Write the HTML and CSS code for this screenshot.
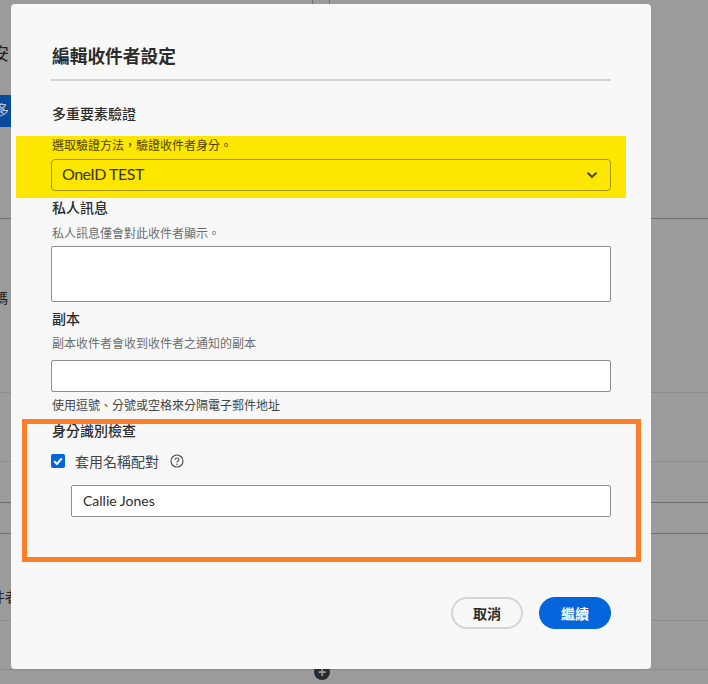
FILE: index.html
```html
<!DOCTYPE html>
<html lang="zh-Hant">
<head>
<meta charset="utf-8">
<title>編輯收件者設定</title>
<link rel="stylesheet" href="styles.css">
</head>
<body>
<div class="backdrop">
  <div class="bg-row bg-top">
    <span class="bg-tick"></span><span class="bg-tick"></span>
    <span class="bg-frag bg-frag-a">安</span>
    <span class="bg-chip">多</span>
  </div>
  <div class="bg-row bg-mid"><span class="bg-frag bg-frag-b">碼</span></div>
  <div class="bg-row bg-r3"></div>
  <div class="bg-row bg-r4"></div>
  <div class="bg-row bg-r5"></div>
  <div class="bg-row bg-r6"><span class="bg-frag bg-frag-c">件者</span></div>
  <div class="bg-row bg-r7"></div>
</div>
<span class="bg-circle">+</span>

<div class="dialog">
  <h1 class="title">編輯收件者設定</h1>
  <div class="rule"></div>

  <h2 class="head head-mfa">多重要素驗證</h2>
  <div class="yellow">
    <p class="hint hint-dark">選取驗證方法&#65292;驗證收件者身分。</p>
    <div class="select">
      <span class="select-value">OneID TEST</span>
      <svg class="chev" width="12" height="8" viewBox="0 0 12 8"><path d="M1.5 1.8 6 6l4.5-4.2" fill="none" stroke="#4a4300" stroke-width="2"/></svg>
    </div>
  </div>

  <h2 class="head head-msg">私人訊息</h2>
  <p class="hint hint-msg">私人訊息僅會對此收件者顯示。</p>
  <div class="field field-area"></div>

  <h2 class="head head-cc">副本</h2>
  <p class="hint hint-cc">副本收件者會收到收件者之通知的副本</p>
  <div class="field field-cc"></div>
  <p class="hint hint-sep">使用逗號、分號或空格來分隔電子郵件地址</p>

  <div class="orange">
    <h2 class="head head-id">身分識別檢查</h2>
    <div class="check-row">
      <span class="checkbox">
        <svg width="14" height="14" viewBox="0 0 14 14"><path d="M3.2 7.2 6 10l4.8-5.6" fill="none" stroke="#fff" stroke-width="2"/></svg>
      </span>
      <span class="check-label">套用名稱配對</span>
      <svg class="help" width="14" height="14" viewBox="0 0 14 14">
        <circle cx="7" cy="7" r="6" fill="none" stroke="#4b4b4b" stroke-width="1.1"/>
        <path d="M5.1 5.6C5.2 4.5 6 4 7 4s1.9.6 1.9 1.6c0 1.4-1.9 1.4-1.9 2.9" fill="none" stroke="#4b4b4b" stroke-width="1.1"/>
        <circle cx="7" cy="10.2" r=".8" fill="#4b4b4b"/>
      </svg>
    </div>
    <div class="field field-name">Callie Jones</div>
  </div>

  <div class="actions">
    <button class="btn btn-cancel">取消</button>
    <button class="btn btn-go">繼續</button>
  </div>
</div>
</body>
</html>
```
FILE: styles.css
```css
html, body {
  margin: 0;
  padding: 0;
  height: 684px;
  overflow: hidden;
}

body {
  position: relative;
  background: #9b9b9b;
  font-family: "Lato", "Noto Sans CJK TC", sans-serif;
  color: #2c2c2c;
}

/* page behind the modal */
.backdrop {
  display: flex;
  flex-direction: column;
}

.bg-row {
  position: relative;
  box-sizing: border-box;
  border-bottom: 1px solid #6f6f6f;
}

.bg-top { height: 219px; }
.bg-mid { height: 174px; border-bottom-color: #8c8c8c; }
.bg-r3 { height: 69px; border-bottom-color: #8c8c8c; }
.bg-r4 { height: 41px; }
.bg-r5 { height: 31px; }
.bg-r6 { height: 87px; border-bottom-color: #8c8c8c; }
.bg-r7 { height: 49px; border-bottom-color: #8c8c8c; }

.bg-tick {
  position: absolute;
  top: 0;
  left: 312px;
  width: 1px;
  height: 5px;
  background: #6f6f6f;
}

.bg-tick + .bg-tick { left: 329px; }

.bg-frag {
  position: absolute;
  font-size: 14px;
  color: #222;
  line-height: 16px;
}

.bg-frag-a { left: -8px; top: 44px; font-size: 17px; line-height: 20px; }
.bg-frag-b { left: -6px; top: 71px; }
.bg-frag-c { left: -9px; top: 55px; }

.bg-chip {
  position: absolute;
  left: 0;
  top: 95px;
  width: 11px;
  height: 32px;
  overflow: hidden;
  background: #0a4a9c;
  color: #b9c8dd;
  font-size: 14px;
  line-height: 30px;
  text-indent: -5px;
}

.bg-circle {
  position: absolute;
  left: 314px;
  top: 664px;
  width: 16px;
  height: 16px;
  border-radius: 50%;
  background: #2b2b2b;
  color: #9b9b9b;
  font: bold 14px/16px "Liberation Sans", sans-serif;
  text-align: center;
}

/* modal */
.dialog {
  position: absolute;
  left: 11px;
  top: 4px;
  box-sizing: border-box;
  width: 640px;
  height: 665px;
  padding: 41px 40px 0 40px;
  background: #f8f8f8;
  border-radius: 4px;
}

.title {
  margin: 0;
  padding-left: 1px;
  font-size: 17.7px;
  font-weight: 700;
  line-height: 24px;
}

.rule {
  height: 2px;
  margin-top: 10px;
  background: #d5d5d5;
}

.head {
  margin: 0;
  padding-left: 1px;
  font-size: 14px;
  font-weight: 500;
  line-height: 18px;
}

.head-mfa { margin-top: 24px; }

.hint {
  margin: 0;
  padding-left: 1px;
  font-size: 12px;
  line-height: 16px;
  color: #6e6e6e;
}

.hint-dark { color: #4b4400; }

.yellow {
  box-sizing: border-box;
  height: 62px;
  margin: 13px -15px 0 -35px;
  padding: 2px 15px 0 35px;
  background: #fde600;
}

.select {
  display: flex;
  align-items: center;
  justify-content: space-between;
  box-sizing: border-box;
  height: 32px;
  margin-top: 5px;
  padding: 0 12px 2px 10px;
  border: 1px solid #a39600;
  border-radius: 4px;
  color: #3c3600;
}

.select-value {
  font-size: 16px;
  letter-spacing: -0.5px;
  line-height: 26px;
}

.chev { margin-top: 2px; }

.head-msg { margin-top: 1px; }
.hint-msg { margin-top: 9px; }

.field {
  box-sizing: border-box;
  background: #fff;
  border: 1px solid #8e8e8e;
  border-radius: 2px;
}

.field-area { height: 56px; margin-top: 4px; }
.head-cc { margin-top: 8px; }
.hint-cc { margin-top: 8px; }
.field-cc { height: 32px; margin-top: 8px; }
.hint-sep { margin-top: 6px; color: #444; }

/* annotation box from the screenshot */
.orange {
  box-sizing: border-box;
  height: 143px;
  margin: 5px -30px 0 -29px;
  padding: 0 25px 0 24px;
  border: 5px solid #fd7e2b;
}

.head-id { margin-top: -2px; }

.check-row {
  display: flex;
  align-items: center;
  height: 20px;
  margin-top: 11px;
}

.checkbox {
  display: flex;
  width: 14px;
  height: 14px;
  background: #0265dc;
  border-radius: 2px;
}

.check-label {
  margin-left: 10px;
  font-size: 14px;
  color: #444;
}

.help { margin-left: 11px; }

.field-name {
  height: 32px;
  margin: 14px 0 0 20px;
  padding-left: 11px;
  font-size: 14px;
  line-height: 29px;
  color: #2c2c2c;
}

.actions {
  display: flex;
  justify-content: flex-end;
  gap: 16px;
  margin-top: 35px;
}

.btn {
  box-sizing: border-box;
  width: 72px;
  height: 32px;
  padding: 0;
  border-radius: 16px;
  font-family: inherit;
  font-size: 14px;
  font-weight: 700;
}

.btn-cancel {
  background: transparent;
  border: 2px solid #d5d5d5;
  color: #2c2c2c;
}

.btn-go {
  background: #0265dc;
  border: 0;
  color: #fff;
}
```
